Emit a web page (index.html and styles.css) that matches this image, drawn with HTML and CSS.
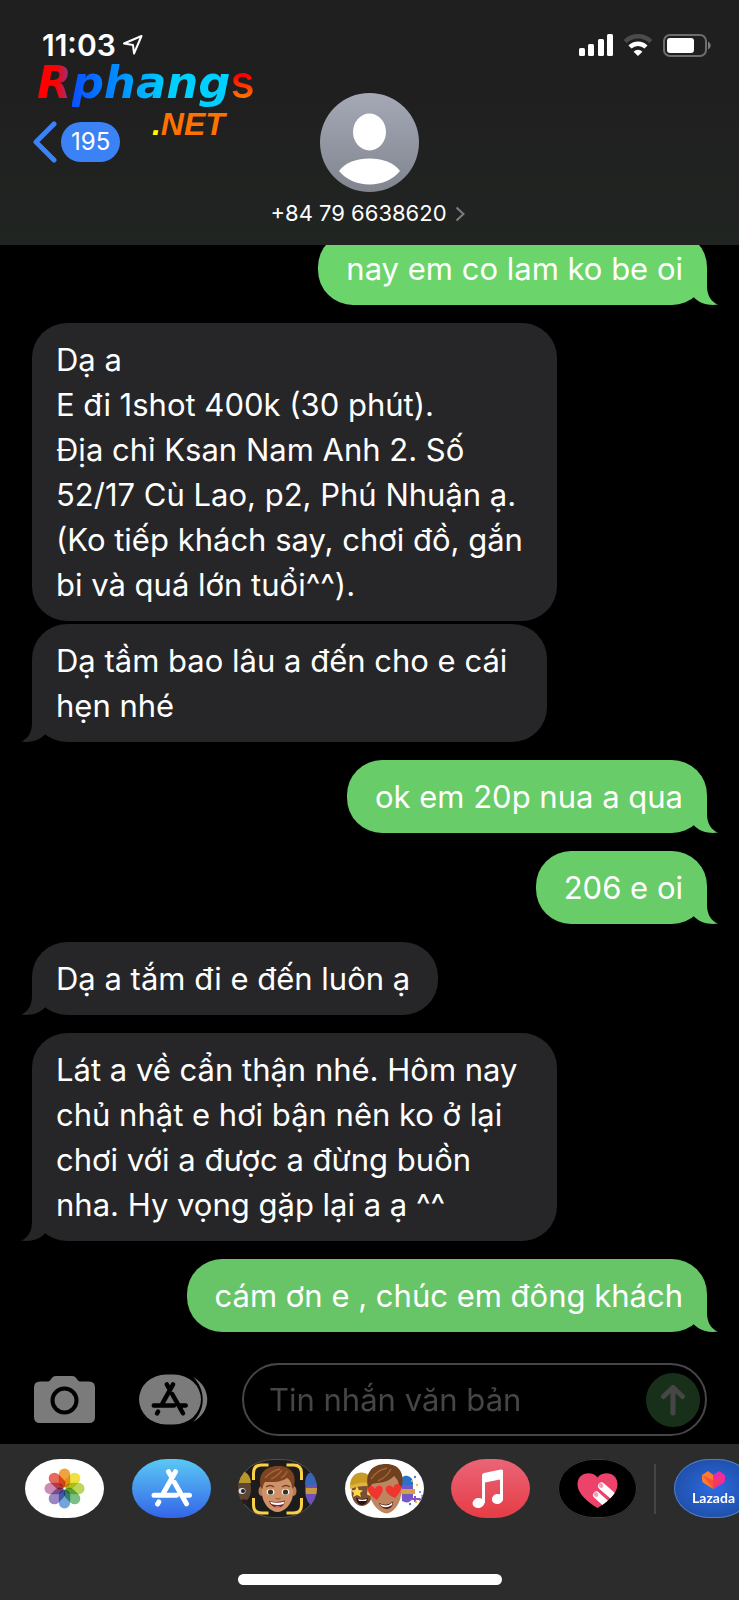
FILE: index.html
```html
<!DOCTYPE HTML>
<html lang="vi">

<head>
  <meta charset="utf-8">
  <meta name="viewport" content="width=device-width, initial-scale=1">
  <title>+84 79 6638620</title>
  <link rel="stylesheet" href="styles.css">
</head>

<body>

<!-- shared shapes -->
<svg class="defs" aria-hidden="true">
  <symbol id="tail" viewBox="0 0 36 36">
    <path d="M4 0H24V17C24 26 28 33 35 35.600C26 37 17 34.500 11.500 29L4 22Z"/>
  </symbol>
  <symbol id="app-a" viewBox="0 0 79 59">
    <g fill="none" stroke="currentColor" stroke-width="5" stroke-linecap="round">
      <path d="M43.500 12.700L31.500 34M36.500 12.700L39 17M42.500 23.500L54.500 44.800M22 36.300H44.500M52.500 36.300H57.500M26.800 43L25.600 45"/>
    </g>
  </symbol>
</svg>

<header class="header">
  <div class="status">
    <div class="status-time">
      <span>11:03</span>
      <svg width="22" height="22" viewBox="0 0 22 22"><path d="M2 9.500L19.500 2L12 19.500L11 11Z" fill="none" stroke="#fff" stroke-width="2" stroke-linejoin="round"/></svg>
    </div>
    <div class="status-icons">
      <svg width="34" height="22" viewBox="0 0 34 22" fill="#fff">
        <rect x="0" y="14" width="6" height="8" rx="1.500"/>
        <rect x="9" y="10" width="6" height="12" rx="1.500"/>
        <rect x="19" y="5" width="6" height="17" rx="1.500"/>
        <rect x="28" y="0" width="6" height="22" rx="1.500"/>
      </svg>
      <svg width="30" height="22" viewBox="0 0 30 22">
        <path d="M2.200 7.500A18.500 18.500 0 0 1 27.800 7.500" fill="none" stroke="#4b4b4b" stroke-width="4.500"/>
        <path d="M7 13A11.500 11.500 0 0 1 23 13" fill="none" stroke="#fff" stroke-width="4.500"/>
        <path d="M15 22L10.600 17.700A6.200 6.200 0 0 1 19.400 17.700Z" fill="#fff"/>
      </svg>
      <svg width="48" height="23" viewBox="0 0 48 23">
        <rect x="1" y="1" width="42" height="21" rx="6" fill="none" stroke="#6d6d6d" stroke-width="2"/>
        <rect x="4" y="4" width="27" height="15" rx="3" fill="#fff"/>
        <path d="M45 7.500C48.500 9 48.500 14 45 15.500Z" fill="#7a7a7a"/>
      </svg>
    </div>
  </div>

  <div class="watermark">
    <span class="watermark-name"><span class="wm-r">R</span><span class="wm-p">phang</span><span class="wm-s">s</span></span>
    <span class="watermark-net"><span class="wm-dot">.</span>NET</span>
  </div>

  <nav class="nav">
    <button class="back" aria-label="Quay lại">
      <svg width="26" height="42" viewBox="0 0 26 42"><path d="M22 3L4 21L22 39" fill="none" stroke="#3b82f7" stroke-width="5" stroke-linecap="round" stroke-linejoin="round"/></svg>
      <span class="badge">195</span>
    </button>
    <a class="contact" href="#">
      <svg class="avatar" width="99" height="99" viewBox="0 0 99 99">
        <defs>
          <linearGradient id="avatar-bg" x1="0" y1="0" x2="0" y2="1">
            <stop offset="0" stop-color="#a5a9b7"/>
            <stop offset="1" stop-color="#81858e"/>
          </linearGradient>
        </defs>
        <circle cx="49.500" cy="49.500" r="49.500" fill="url(#avatar-bg)"/>
        <ellipse cx="49.500" cy="39" rx="16.500" ry="18.500" fill="#fff"/>
        <path d="M19 78C25 69.500 37 65.500 49.500 65.500S74 69.500 80 78C73 86.500 62 91.500 49.500 91.500S26 86.500 19 78Z" fill="#fff"/>
      </svg>
      <span class="phone">+84 79 6638620
        <svg width="10" height="16" viewBox="0 0 10 16"><path d="M1.500 1.500L8.500 8L1.500 14.500" fill="none" stroke="#7d7e84" stroke-width="2"/></svg>
      </span>
    </a>
  </nav>
</header>

<main class="thread">
  <p class="bubble sent first">nay em co lam ko be oi<svg class="tail"><use href="#tail"/></svg></p>
  <p class="bubble got grouped">Dạ a<br>E đi 1shot 400k (30 phút).<br>Địa chỉ Ksan Nam Anh 2. Số 52/17 Cù Lao, p2, Phú Nhuận ạ.<br>(Ko tiếp khách say, chơi đồ, gắn bi và quá lớn tuổi^^).</p>
  <p class="bubble got narrow">Dạ tầm bao lâu a đến cho e cái hẹn nhé<svg class="tail"><use href="#tail"/></svg></p>
  <p class="bubble sent">ok em 20p nua a qua<svg class="tail"><use href="#tail"/></svg></p>
  <p class="bubble sent">206 e oi<svg class="tail"><use href="#tail"/></svg></p>
  <p class="bubble got">Dạ a tắm đi e đến luôn ạ<svg class="tail"><use href="#tail"/></svg></p>
  <p class="bubble got">Lát a về cẩn thận nhé. Hôm nay chủ nhật e hơi bận nên ko ở lại chơi với a được a đừng buồn nha. Hy vọng gặp lại a ạ ^^<svg class="tail"><use href="#tail"/></svg></p>
  <p class="bubble sent last">cám ơn e , chúc em đông khách<svg class="tail"><use href="#tail"/></svg></p>
</main>

<form class="compose">
  <button class="tool" type="button" aria-label="Máy ảnh">
    <svg width="61" height="47" viewBox="0 0 61 47">
      <path d="M6 5.500H14C17 5.500 17 0 22 0H38C43 0 43 5.500 46 5.500H55Q61 5.500 61 11.500V41Q61 47 55 47H6Q0 47 0 41V11.500Q0 5.500 6 5.500Z" fill="#7b7b7b"/>
      <circle cx="30.500" cy="24.500" r="12" fill="none" stroke="#000" stroke-width="4"/>
    </svg>
  </button>
  <button class="tool tool-apps" type="button" aria-label="Ứng dụng">
    <svg width="69" height="51" viewBox="0 0 69 51">
      <path d="M54 3C73 13 73 38 54 48C67 36 67 15 54 3Z" fill="#7b7b7b"/>
      <rect x="0" y="0.500" width="62" height="50" rx="27" ry="25" fill="#7b7b7b"/>
      <use href="#app-a" x="-5" y="-1" width="71" height="53" color="#000"/>
    </svg>
  </button>
  <div class="field">
    <input class="field-input" type="text" placeholder="Tin nhắn văn bản" aria-label="Tin nhắn văn bản">
    <button class="send" type="submit" aria-label="Gửi">
      <svg width="26" height="32" viewBox="0 0 26 32"><path d="M13 29V4M3.500 12.500L13 3.500L22.500 12.500" fill="none" stroke="#464648" stroke-width="5" stroke-linecap="round" stroke-linejoin="round"/></svg>
    </button>
  </div>
</form>

<footer class="shelf">
  <div class="apps">
    <div class="apps-main">
      <button class="app app-photos" aria-label="Ảnh">
        <svg viewBox="0 0 79 59">
          <g class="petals" transform="translate(39.500 29.500)">
            <rect x="-5.700" y="-20" width="11.400" height="19" rx="5.700" fill="#f0a23c"/>
            <rect x="-5.700" y="-20" width="11.400" height="19" rx="5.700" fill="#f0e23e" transform="rotate(45)"/>
            <rect x="-5.700" y="-20" width="11.400" height="19" rx="5.700" fill="#b9d75c" transform="rotate(90)"/>
            <rect x="-5.700" y="-20" width="11.400" height="19" rx="5.700" fill="#7bbf86" transform="rotate(135)"/>
            <rect x="-5.700" y="-20" width="11.400" height="19" rx="5.700" fill="#70a6dc" transform="rotate(180)"/>
            <rect x="-5.700" y="-20" width="11.400" height="19" rx="5.700" fill="#9a88c4" transform="rotate(225)"/>
            <rect x="-5.700" y="-20" width="11.400" height="19" rx="5.700" fill="#ca8bb7" transform="rotate(270)"/>
            <rect x="-5.700" y="-20" width="11.400" height="19" rx="5.700" fill="#e56a60" transform="rotate(315)"/>
          </g>
        </svg>
      </button>
      <button class="app app-store" aria-label="App Store">
        <svg viewBox="0 0 79 59"><use href="#app-a" width="79" height="59"/></svg>
      </button>
      <button class="app app-memoji" aria-label="Memoji">
        <svg viewBox="0 0 79 59">
          <!-- left neighbour -->
          <ellipse cx="3" cy="30" rx="10" ry="14" fill="#5d4435"/>
          <path d="M-8 24C-6 8 12 8 13 24Z" fill="#b8962a"/>
          <ellipse cx="4" cy="32" rx="3.500" ry="3" fill="#ddd"/>
          <circle cx="5" cy="32" r="2" fill="#222"/>
          <path d="M1 42Q5 39 9 41V45H2Z" fill="#2c1c17"/>
          <!-- right neighbour -->
          <ellipse cx="76" cy="31" rx="9" ry="16" fill="#6d53b8"/>
          <path d="M67 24C68 12 74 12 82 16V26H67Z" fill="#3565b5"/>
          <path d="M68 29H80V35H68Z" fill="#c89a3c"/>
          <!-- face -->
          <ellipse cx="23.500" cy="32" rx="3" ry="5" fill="#b97c55"/>
          <ellipse cx="55.500" cy="32" rx="3" ry="5" fill="#b97c55"/>
          <path d="M24 22C24 14 55 14 55 22V34C55 45 46 53 39.500 53S24 45 24 34Z" fill="#cf9168"/>
          <path d="M23 29C19 13 29 7 40 7C53 7 59 15 56 28L54 30C54 24 52 21 49 19C42 24 32 23 27 23C25 25 25 28 24.500 30Z" fill="#7b431f"/>
          <path d="M27 19Q33 12 42 10M33 20Q40 17 44 11M43 19Q48 16 49 12" fill="none" stroke="#a26436" stroke-width="1.500"/>
          <path d="M28 28Q32 25 36 28M44 28Q48 25 52 28" fill="none" stroke="#70401f" stroke-width="1.500"/>
          <ellipse cx="32.500" cy="33" rx="3.800" ry="3" fill="#fff"/>
          <ellipse cx="47.500" cy="33" rx="3.800" ry="3" fill="#fff"/>
          <circle cx="32.500" cy="33" r="2.600" fill="#31351d"/>
          <circle cx="47.500" cy="33" r="2.600" fill="#31351d"/>
          <path d="M37.500 39Q40 41 42.500 39" fill="none" stroke="#a96a48" stroke-width="1.500"/>
          <path d="M31 42Q39.500 44 47 41.500C46 51 34 51 31 42Z" fill="#6e2822"/>
          <path d="M32 42.800Q39.500 45 46.500 42.500L45.500 45Q39.500 47 33.500 45Z" fill="#fff"/>
          <path d="M36 48Q39.500 46 43 48Q39.500 50 36 48Z" fill="#e0707a"/>
          <!-- camera frame -->
          <path d="M15.500 21V14Q15.500 6 23.500 6H30.500M48.500 6H55.500Q63.500 6 63.500 14V21M63.500 39V46Q63.500 54 55.500 54H48.500M30.500 54H23.500Q15.500 54 15.500 46V39" fill="none" stroke="#fcd045" stroke-width="3"/>
        </svg>
      </button>
      <button class="app app-stickers" aria-label="Nhãn dán Memoji">
        <svg viewBox="0 0 79 59">
          <!-- left character -->
          <ellipse cx="17" cy="33" rx="10.500" ry="14" fill="#7a4f36"/>
          <path d="M5 27C5 9 27 10 28 25Q17 22 5 27Z" fill="#c99b25"/>
          <path d="M5 27Q17 21 28 25V28Q17 25 5 30Z" fill="#e0b53a"/>
          <path d="M12 27L13.800 31L18 31.400L15 34L16 38L12 36L8 38L9 34L6 31.400L10.200 31Z" fill="#ffd84a"/>
          <path d="M23 28L24 31L27 31.400L25 34L25.500 37L22 35.500Z" fill="#ffd84a"/>
          <path d="M11 39Q17 41 23 39Q22 46 17 46T11 39Z" fill="#2c1613"/>
          <path d="M13 40Q17 41.500 22 40L21 42H14Z" fill="#fff"/>
          <!-- right character -->
          <path d="M56 20Q68 16 68 28V39Q64 46 57 42Z" fill="#7458c7"/>
          <path d="M55 24C55 14 67 15 68 23V26H56Z" fill="#2c70c9"/>
          <path d="M56 30H70V35H56Z" fill="#d5a144"/>
          <path d="M65 40H75M70 37V43M74 41Q79 40 77 36" fill="none" stroke="#8456c4" stroke-width="2"/>
          <g fill="#4b7fe0"><circle cx="70" cy="18" r="1.200"/><circle cx="75" cy="33" r="1"/><circle cx="65" cy="45" r="1.200"/></g>
          <g fill="#f2c33c"><circle cx="72" cy="26" r="1.200"/><circle cx="71" cy="43" r="1.200"/><circle cx="67" cy="22" r="1"/></g>
          <!-- heart eyes -->
          <path d="M25 24C25 12 56 12 56 24V36C55 46 47 54.500 41.500 54.500S26 46 25 36Z" fill="#bf8560"/>
          <path d="M24 32C18 13 28 5 41 5C54 5 61 14 56 31L54 28C54 22 52 20 49 17C42 25 33 23 27 25Q25 28 24 32Z" fill="#70411f"/>
          <path d="M26 20Q32 11 42 9M33 22Q42 18 46 10" fill="none" stroke="#a26537" stroke-width="1.500"/>
          <path d="M32 41C25 36 21 32 23.500 28.500C25.500 26 29 27 30 30C31 26.500 35.500 25.500 37.500 28.500C39 32 35 37 32 41Z" fill="#f0352f"/>
          <path d="M50 39C43 36 39.500 32 41 28.500C43 25.500 47 26 48 29C49 25 53 23.500 55.500 26.500C57.500 30 54 35 50 39Z" fill="#f0352f"/>
          <path d="M34 44Q42 48 48 42.500C49 51 37 53 34 44Z" fill="#4d1916"/>
          <path d="M35 45Q42 48.500 47.500 43.500L47 46Q41 50 36 47Z" fill="#fff"/>
        </svg>
      </button>
      <button class="app app-music" aria-label="Nhạc">
        <svg viewBox="0 0 79 59" fill="#fff">
          <path d="M31 16.500Q31 14.500 33 14L50 10.500Q52 10 52 12V40H49V20.500L34 23.500V44H31Z"/>
          <ellipse cx="27.500" cy="44" rx="6" ry="5" transform="rotate(-12 27.500 44)"/>
          <ellipse cx="46.500" cy="40" rx="5.700" ry="5" transform="rotate(-12 46.500 40)"/>
        </svg>
      </button>
      <button class="app app-touch" aria-label="Digital Touch">
        <svg viewBox="0 0 79 59">
          <defs>
            <clipPath id="heart"><path d="M39.500 49C30 43 19.500 35 19.500 25.500C19.500 13 34 11.500 39.500 18.500C45 11.500 59.500 13 59.500 25.500C59.500 35 49 43 39.500 49Z"/></clipPath>
          </defs>
          <g clip-path="url(#heart)">
            <rect width="79" height="59" fill="#ed4269"/>
            <g stroke="#fff" stroke-width="7" stroke-linecap="round">
              <path d="M43.500 27L62 43M38.500 36L56 52"/>
            </g>
            <g fill="#f4a0b4"><ellipse cx="43" cy="26.500" rx="2.200" ry="2.600" transform="rotate(-45 43 26.500)"/><ellipse cx="38" cy="35.500" rx="2.200" ry="2.600" transform="rotate(-45 38 35.500)"/></g>
          </g>
        </svg>
      </button>
    </div>
    <span class="apps-line"></span>
    <button class="app app-lazada">
      <svg width="23" height="18" viewBox="0 0 23 18">
        <path d="M0 4L6 0L11.500 4V18L1.500 12Q0 11 0 9Z" fill="#ff7a2a"/>
        <path d="M23 4L17 0L11.500 4V18L21.500 12Q23 11 23 9Z" fill="#ee2aa8"/>
        <path d="M0 4L11.500 9.500L23 4L11.500 18Z" fill="#f5433f" opacity="0.700"/>
      </svg>
      <span>Lazada</span>
    </button>
  </div>
  <div class="home-bar"></div>
</footer>

</body>

</html>
```

FILE: styles.css
```css
* {
  box-sizing: border-box;
}

body {
  margin: 0;
  background: #000;
  color: #fff;
  font-family: Inter, "Liberation Sans", sans-serif;
  overflow-x: hidden;
}

button {
  border: none;
  padding: 0;
  background: none;
  color: inherit;
  font: inherit;
}

svg {
  display: block;
  flex: none;
}

.defs {
  position: absolute;
  width: 0;
  height: 0;
}

/* header */

.header {
  position: relative;
  z-index: 1;
  padding: 29px 32px 17px;
  background: linear-gradient(#1f1f1f 40%, #212522);
}

.status {
  display: flex;
  justify-content: space-between;
  align-items: center;
  height: 32px;
  padding-left: 10px;
}

.status-time {
  display: flex;
  align-items: center;
  gap: 6px;
  font-size: 30px;
  font-weight: 600;
}

.status-icons {
  display: flex;
  align-items: center;
  gap: 10px;
  margin-right: -4px;
}

.nav {
  display: grid;
  grid-template-columns: 1fr auto 1fr;
  padding-top: 32px;
}

.back {
  display: flex;
  align-items: center;
  gap: 3px;
  align-self: start;
  justify-self: start;
  margin-top: 28px;
}

.badge {
  padding: 0 10px;
  border-radius: 20px;
  background: #3b82f7;
  font-size: 24px;
  line-height: 40px;
}

.contact {
  display: flex;
  flex-direction: column;
  align-items: center;
  gap: 7px;
  color: #fff;
  text-decoration: none;
}

.phone {
  display: flex;
  align-items: center;
  gap: 8px;
  margin-right: 4px;
  font-size: 22px;
  line-height: 29px;
}

/* site mark lies over the status bar */

.watermark {
  position: absolute;
  top: 54px;
  left: 37px;
  display: flex;
  flex-direction: column;
  font-weight: 700;
  font-style: italic;
}

.watermark-name {
  font-family: "DejaVu Sans", sans-serif;
  font-size: 45px;
  line-height: 56px;
  white-space: nowrap;
}

.watermark-name span {
  color: transparent;
  background-clip: text;
  -webkit-background-clip: text;
}

.watermark-name .wm-r {
  background-image: linear-gradient(90deg, #f00 55%, #7a3fa0);
}

.watermark-name .wm-p {
  background-image: linear-gradient(90deg, #0a50ff, #00a5ff 40%, #00d0ff 60%);
}

.watermark-name .wm-s {
  background-image: linear-gradient(#f00 40%, #ff7a00 80%);
  font-family: Inter, sans-serif;
  font-weight: 500;
  font-style: normal;
}

.watermark-net {
  align-self: flex-end;
  margin-right: 30px;
  color: #ff7200;
  font-family: "Liberation Sans", sans-serif;
  font-size: 32px;
  line-height: 26px;
}

.wm-dot {
  color: #ff0;
}

/* messages */

.thread {
  display: flex;
  flex-direction: column;
  gap: 18px;
  margin-top: -13px;
  padding: 0 32px;
}

.bubble {
  position: relative;
  max-width: 525px;
  margin: 0;
  padding: 14px 24px;
  border-radius: 35px;
  font-size: 31px;
  line-height: 45px;
}

.got {
  align-self: flex-start;
  padding-right: 28px;
  background: #262628;
  fill: #262628;
}

.sent {
  align-self: flex-end;
  padding-left: 28px;
  background: #68cc68;
  fill: #68cc68;
}

.first {
  background: #6bd56b;
  fill: #6bd56b;
}

.last {
  background: #67c568;
  fill: #67c568;
}

.grouped {
  margin-bottom: -15px;
}

.narrow {
  max-width: 515px;
}

.tail {
  position: absolute;
  right: -12px;
  bottom: 0;
  width: 36px;
  height: 36px;
}

.got .tail {
  right: auto;
  left: -12px;
  transform: scaleX(-1);
}

/* message field */

.compose {
  display: flex;
  align-items: center;
  padding: 31px 32px 8px 34px;
}

.tool-apps {
  margin: 0 34px 0 44px;
}

.field {
  display: flex;
  flex: 1;
  align-items: center;
  min-width: 0;
  height: 73px;
  padding: 0 5px 0 25px;
  border: 2px solid #464648;
  border-radius: 37px;
}

.field-input {
  flex: 1;
  min-width: 0;
  padding: 0;
  border: none;
  outline: none;
  background: none;
  color: #fff;
  font: inherit;
  font-size: 31px;
}

.field-input::placeholder {
  color: #464648;
  opacity: 1;
}

.send {
  display: flex;
  flex: none;
  align-items: center;
  justify-content: center;
  width: 54px;
  height: 54px;
  border-radius: 50%;
  background: #18301a;
}

/* app shelf */

.shelf {
  padding: 15px 0;
  background: #2c2c2c;
  overflow: hidden;
}

.apps {
  display: flex;
  align-items: center;
  padding-left: 25px;
}

.apps-main {
  display: flex;
  flex: none;
  justify-content: space-between;
  width: 612px;
}

.app {
  flex: none;
  width: 79px;
  height: 59px;
  border-radius: 36px / 30px;
  overflow: hidden;
}

.apps-line {
  flex: none;
  width: 2px;
  height: 50px;
  margin: 0 18px 0 17px;
  background: #464648;
}

.app-photos {
  background: #fff;
}

.petals {
  isolation: isolate;
}

.petals rect {
  mix-blend-mode: multiply;
}

.app-store {
  background: linear-gradient(#5ac8f5, #3465e8);
}

.app-memoji {
  background: #1c1c1c;
  box-shadow: inset 0 0 0 1px #505050;
}

.app-stickers {
  background: #fff;
}

.app-music {
  background: linear-gradient(#ea6577, #e63c45);
}

.app-touch {
  background: #000;
  box-shadow: inset 0 0 0 1px #3c3c3c;
}

.app-lazada {
  display: flex;
  flex-direction: column;
  align-items: center;
  background: radial-gradient(#2b6be0, #1c4596);
  box-shadow: inset 0 0 0 1px #4f7fc0;
  padding-top: 12px;
  font-family: Lato, sans-serif;
  font-size: 14px;
  font-weight: 700;
  line-height: 18px;
}

.home-bar {
  width: 264px;
  height: 11px;
  margin: 56px auto 0;
  border-radius: 6px;
  background: #fff;
}
```
